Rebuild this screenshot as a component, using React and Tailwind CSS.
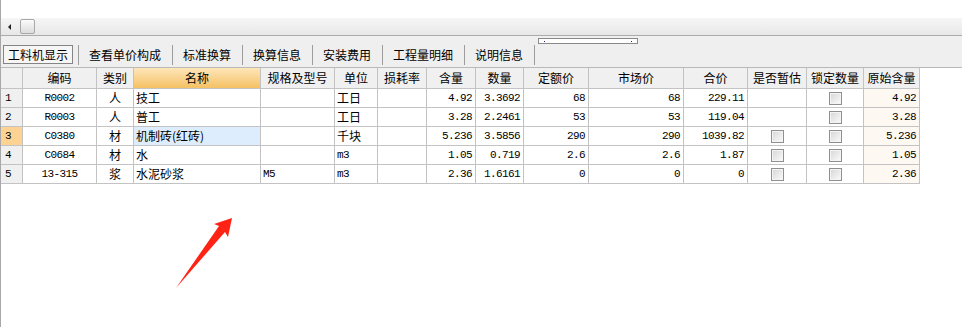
import React from 'react';

// colonnes du tableau : largeur (bord droit compris), titre
const cols = [
  { key: 'rn', w: 'w-[22px]', label: '' },
  { key: 'code', w: 'w-[74px]', label: '编码' },
  { key: 'type', w: 'w-[37px]', label: '类别' },
  { key: 'name', w: 'w-[127px]', label: '名称' },
  { key: 'spec', w: 'w-[74px]', label: '规格及型号' },
  { key: 'unit', w: 'w-[43px]', label: '单位' },
  { key: 'loss', w: 'w-[49px]', label: '损耗率' },
  { key: 'qty', w: 'w-[49px]', label: '含量' },
  { key: 'num', w: 'w-[48px]', label: '数量' },
  { key: 'quota', w: 'w-[65px]', label: '定额价' },
  { key: 'market', w: 'w-[95px]', label: '市场价' },
  { key: 'total', w: 'w-[64px]', label: '合价' },
  { key: 'est', w: 'w-[59px]', label: '是否暂估' },
  { key: 'lock', w: 'w-[57px]', label: '锁定数量' },
  { key: 'orig', w: 'w-[56px]', label: '原始含量' },
];

const rows = [
  { code: 'R0002', type: '人', name: '技工', spec: '', unit: '工日', qty: '4.92', num: '3.3692', quota: '68', market: '68', total: '229.11', est: false, orig: '4.92' },
  { code: 'R0003', type: '人', name: '普工', spec: '', unit: '工日', qty: '3.28', num: '2.2461', quota: '53', market: '53', total: '119.04', est: false, orig: '3.28' },
  { code: 'C0380', type: '材', name: '机制砖(红砖)', spec: '', unit: '千块', qty: '5.236', num: '3.5856', quota: '290', market: '290', total: '1039.82', est: true, orig: '5.236' },
  { code: 'C0684', type: '材', name: '水', spec: '', unit: 'm3', qty: '1.05', num: '0.719', quota: '2.6', market: '2.6', total: '1.87', est: true, orig: '1.05' },
  { code: '13-315', type: '浆', name: '水泥砂浆', spec: 'M5', unit: 'm3', qty: '2.36', num: '1.6161', quota: '0', market: '0', total: '0', est: true, orig: '2.36' },
];

const tabs = ['查看单价构成', '标准换算', '换算信息', '安装费用', '工程量明细', '说明信息'];

const mono = "font-['Liberation_Mono',monospace] text-[11px] tracking-[-0.6px]";
const cell = 'shrink-0 h-full border-r border-[#c3c3c3] flex items-center overflow-hidden whitespace-nowrap';

const CheckBox = () => (
  <span className="w-[13px] h-[13px] border border-[#8f8f8f] bg-linear-to-br from-[#d6d6d6] to-[#fbfbfb] shadow-[inset_0_0_0_1px_#f4f4f4]" />
);

const App = () => {
  return (
    <div className="relative w-[962px] h-[327px] overflow-hidden bg-white border-l border-[#a8a8a8] font-['Noto_Sans_CJK_SC',sans-serif] text-[12px] text-black">
      <div className="h-[18px]" />

      {/* barre de défilement horizontale */}
      <div className="h-[17px] flex items-center bg-linear-to-b from-[#f6f6f6] to-[#e7e7e7]">
        <span className="ml-[7px] w-0 h-0 border-y-[3px] border-y-transparent border-r-[3px] border-r-[#222]" />
        <span className="ml-[9px] w-[15px] h-[15px] rounded-[2px] border border-[#a8a8a8] bg-linear-to-b from-[#fbfbfb] to-[#dcdcdc]" />
      </div>
      <div className="h-px bg-[#ababab]" />

      {/* onglets */}
      <div className="h-[31px] flex items-start bg-[#efefef]">
        <div className="mt-[9px] ml-[2px] h-[19px] px-[4px] border border-[#858585] bg-[#f6f6f6] leading-[17px]">工料机显示</div>
        <div className="mt-[9px] ml-[5px] w-px h-[20px] bg-[#9d9d9d]" />
        {tabs.map((t) => (
          <React.Fragment key={t}>
            <div className="mt-[9px] h-[20px] pl-[10px] pr-[11px] leading-[19px]">{t}</div>
            <div className="mt-[9px] w-px h-[20px] bg-[#9d9d9d]" />
          </React.Fragment>
        ))}
        <div className="mt-[2px] ml-[3px] w-[100px] h-[6px] border border-[#8a8a8a] bg-white flex items-center justify-between px-[5px]">
          <span className="w-px h-px bg-[#1a1a8a]" />
          <span className="w-px h-px bg-[#1a1a8a]" />
        </div>
      </div>
      <div className="h-px bg-[#b9b9b9]" />

      {/* tableau */}
      <div className="w-fit">
        <div className="flex h-[21px] border-b border-[#c3c3c3] bg-[#f0f0f0]">
          {cols.map((c) => (
            <div
              key={c.key}
              className={`${cell} ${c.w} justify-center ${c.key === 'name' ? 'bg-linear-to-b from-[#fde6b8] to-[#f5c163]' : ''}`}
            >
              {c.label}
            </div>
          ))}
        </div>

        {rows.map((r, i) => (
          <div key={r.code} className="flex h-[19px] border-b border-[#c3c3c3]">
            <div className={`${cell} w-[22px] pl-[4px] ${mono} ${i === 2 ? 'bg-[#fdd393]' : 'bg-[#f0f0f0]'}`}>{i + 1}</div>
            <div className={`${cell} w-[74px] justify-center ${mono}`}>{r.code}</div>
            <div className={`${cell} w-[37px] justify-center`}>{r.type}</div>
            <div className={`${cell} w-[127px] pl-[2px] ${i === 2 ? 'bg-[#ddedfd]' : ''}`}>{r.name}</div>
            <div className={`${cell} w-[74px] pl-[2px] ${mono}`}>{r.spec}</div>
            <div className={`${cell} w-[43px] pl-[2px] ${/^[a-z]/.test(r.unit) ? mono : ''}`}>{r.unit}</div>
            <div className={`${cell} w-[49px]`} />
            <div className={`${cell} w-[49px] justify-end pr-[3px] ${mono}`}>{r.qty}</div>
            <div className={`${cell} w-[48px] justify-end pr-[3px] ${mono}`}>{r.num}</div>
            <div className={`${cell} w-[65px] justify-end pr-[3px] ${mono}`}>{r.quota}</div>
            <div className={`${cell} w-[95px] justify-end pr-[3px] ${mono}`}>{r.market}</div>
            <div className={`${cell} w-[64px] justify-end pr-[3px] ${mono}`}>{r.total}</div>
            <div className={`${cell} w-[59px] justify-center`}>{r.est && <CheckBox />}</div>
            <div className={`${cell} w-[57px] justify-center`}><CheckBox /></div>
            <div className={`${cell} w-[56px] justify-end pr-[3px] bg-[#fdf8f1] ${mono}`}>{r.orig}</div>
          </div>
        ))}
      </div>

      {/* flèche rouge d'annotation */}
      <svg className="absolute left-0 top-0 pointer-events-none" width="962" height="327">
        <polygon
          points="175,288 218,226 213,224 231,218 227,237 224,232"
          fill="#ff2316"
        />
      </svg>
    </div>
  );
};

export default App;
